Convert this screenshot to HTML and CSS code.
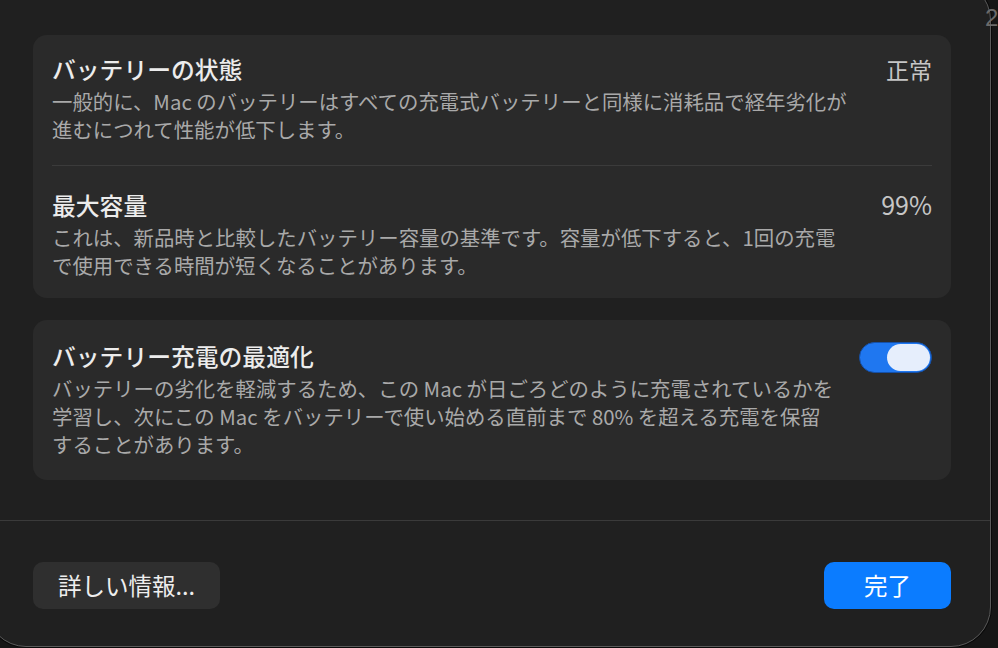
FILE: index.html
```html
<!DOCTYPE html>
<html lang="ja">
<head>
<meta charset="utf-8">
<link rel="stylesheet" href="styles.css">
</head>
<body>
<div class="stage">
  <div class="window">
    <div class="content">
      <section class="card">
        <div class="row">
          <div class="text">
            <div class="title">バッテリーの状態</div>
            <div class="desc">一般的に、Mac のバッテリーはすべての充電式バッテリーと同様に消耗品で経年劣化が<br>進むにつれて性能が低下します。</div>
          </div>
          <div class="value">正常</div>
        </div>
        <div class="divider"></div>
        <div class="row row2">
          <div class="text">
            <div class="title">最大容量</div>
            <div class="desc">これは、新品時と比較したバッテリー容量の基準です。容量が低下すると、1回の充電<br>で使用できる時間が短くなることがあります。</div>
          </div>
          <div class="value value-num">99%</div>
        </div>
      </section>
      <section class="card card2">
        <div class="row">
          <div class="text">
            <div class="title">バッテリー充電の最適化</div>
            <div class="desc">バッテリーの劣化を軽減するため、この Mac が日ごろどのように充電されているかを<br>学習し、次にこの Mac をバッテリーで使い始める直前まで 80% を超える充電を保留<br>することがあります。</div>
          </div>
          <div class="toggle"><span class="knob"></span></div>
        </div>
      </section>
    </div>
    <div class="separator"></div>
    <div class="footer">
      <button class="btn btn-secondary">詳しい情報...</button>
      <button class="btn btn-primary">完了</button>
    </div>
  </div>
  <div class="outside">
    <span class="peek">2</span>
  </div>
</div>
</body>
</html>
```
FILE: styles.css
```css
html, body {
  margin: 0;
  padding: 0;
  background: #161616;
  overflow: hidden;
  width: 998px;
  height: 648px;
}
body {
  font-family: "Noto Sans CJK JP", "Noto Sans", sans-serif;
  -webkit-font-smoothing: antialiased;
}
.stage {
  display: flex;
  width: 998px;
  height: 648px;
  overflow: hidden;
}
.window {
  flex: none;
  margin: -20px 0 0 -14px;
  width: 1005px;
  height: 667px;
  box-sizing: border-box;
  background: #202020;
  border: 1px solid #5a5a5a;
  border-radius: 40px;
  box-shadow: 0 0 0 1px #0a0a0a;
  display: flex;
  flex-direction: column;
}
.content {
  padding: 54px 39px 0 46px;
  display: flex;
  flex-direction: column;
  gap: 22px;
}
.card {
  background: #2a2a2a;
  border-radius: 14px;
  padding: 19px 19px 19px 19px;
}
.card2 {
  padding: 21px 19px 22px 19px;
}
.row {
  display: flex;
  justify-content: space-between;
  align-items: flex-start;
}
.row2 {
  padding-top: 24px;
}
.title {
  color: #ececec;
  font-size: 23.8px;
  font-weight: 500;
  line-height: 30px;
  white-space: nowrap;
}
.desc {
  margin-top: 3px;
  color: #a9a9a9;
  font-size: 20.4px;
  line-height: 28px;
  white-space: nowrap;
}
.value {
  color: #c6c6c6;
  font-size: 23px;
  line-height: 30px;
  white-space: nowrap;
}
.value-num {
  font-size: 25px;
  margin-top: -1px;
}
.divider {
  height: 1px;
  background: #3b3b3b;
  margin-top: 22px;
}
.toggle {
  flex: none;
  margin-top: 1px;
  width: 73px;
  height: 31px;
  box-sizing: border-box;
  border-radius: 16px;
  background: #1f77f0;
  border: 1px solid #1550a8;
  display: flex;
  justify-content: flex-end;
  align-items: center;
  padding-right: 1px;
}
.knob {
  width: 43px;
  height: 27px;
  border-radius: 14px;
  background: #e6eefc;
}
.separator {
  margin-top: 40px;
  height: 1px;
  background: #3a3a3a;
}
.footer {
  display: flex;
  justify-content: space-between;
  padding: 41px 39px 0 46px;
}
.btn {
  font-family: "Noto Sans CJK JP", "Noto Sans", sans-serif;
  font-size: 23.5px;
  height: 47px;
  border: none;
  border-radius: 10px;
  color: #eeeeee;
  padding: 0;
  line-height: 47px;
}
.btn-secondary {
  width: 187px;
  background: #2f2f2f;
}
.btn-primary {
  width: 127px;
  background: #0b7cff;
  color: #ffffff;
}
.outside {
  flex: 1;
  position: relative;
}
.peek {
  position: absolute;
  left: -6px;
  top: 4px;
  color: #6a6a6a;
  font-family: "Liberation Sans", sans-serif;
  font-size: 24px;
}
```
